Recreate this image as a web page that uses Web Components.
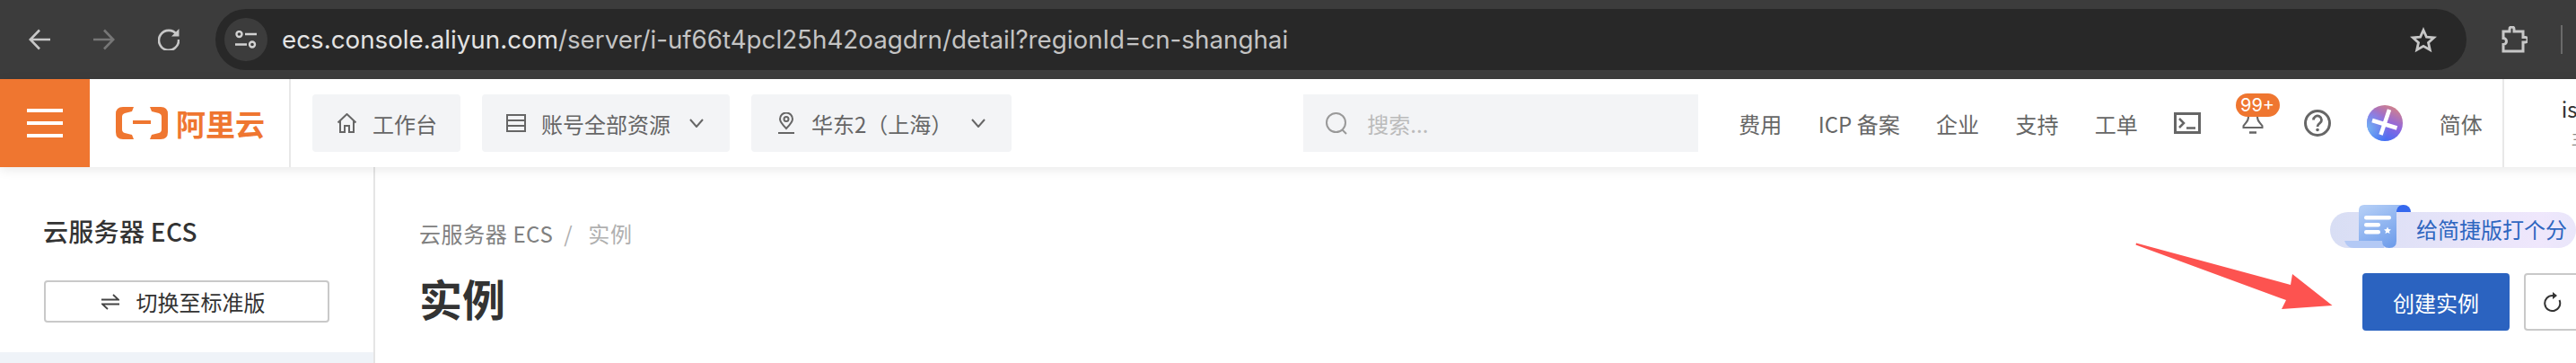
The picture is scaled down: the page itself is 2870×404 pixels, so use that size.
<!DOCTYPE html>
<html lang="zh-CN">
<head>
<meta charset="utf-8">
<title>实例</title>
<style>
    html, body { margin: 0; padding: 0; width: 2870px; height: 404px; overflow: hidden; background: #fff; }
    body { font-family: "Noto Sans CJK SC", sans-serif; position: relative; }
    svg { display: block; }
</style>
</head>
<body>
<browser-bar url-host="ecs.console.aliyun.com" url-path="/server/i-uf66t4pcl25h42oagdrn/detail?regionId=cn-shanghai"></browser-bar>
<console-header></console-header>
<console-main></console-main>
<red-arrow></red-arrow>

<script>
class BrowserBar extends HTMLElement {
    constructor() {
        super();
        this.root = this.attachShadow({ mode: "open" });
        this.root.innerHTML = `
            <style>
                :host {
                    display: flex;
                    align-items: center;
                    height: 88px;
                    box-sizing: border-box;
                    background: #3c3c3c;
                    padding-left: 32px;
                    color: #c7c7c7;
                }
                .nav { display: flex; gap: 48px; align-items: center; }
                .omni {
                    display: flex;
                    align-items: center;
                    width: 2508px;
                    height: 68px;
                    margin-left: 40px;
                    padding: 0 33px 0 10px;
                    box-sizing: border-box;
                    background: #282828;
                    border-radius: 34px;
                }
                .tune {
                    width: 48px;
                    height: 48px;
                    border-radius: 50%;
                    background: #3c3c3c;
                    display: flex;
                    align-items: center;
                    justify-content: center;
                    flex: none;
                }
                .url {
                    margin-left: 16px;
                    flex: 1;
                    font: 400 27.75px/40px Inter, "Liberation Sans", sans-serif;
                    color: #c4c4c4;
                    white-space: nowrap;
                }
                .url b { font-weight: 400; color: #e3e3e3; }
                .ext { margin-left: 38px; }
                .sep { margin-left: 37px; width: 2px; height: 32px; background: #6a6a6a; }
            </style>
            <div class="nav">
                <svg width="24" height="24" viewBox="0 0 24 24" fill="none" stroke="#c7c7c7" stroke-width="2.6"><path d="M24 12H2M12 1.5L1.8 12 12 22.5"/></svg>
                <svg width="24" height="24" viewBox="0 0 24 24" fill="none" stroke="#767676" stroke-width="2.6"><path d="M0 12H22M12 1.5L22.2 12 12 22.5"/></svg>
                <svg width="24" height="24" viewBox="0 0 24 24" fill="none" stroke="#c7c7c7" stroke-width="2.6"><path d="M21 6.5A11 11 0 1 0 23 12"/><path d="M23.5 0V8.5H15Z" fill="#c7c7c7" stroke="none"/></svg>
            </div>
            <div class="omni">
                <div class="tune">
                    <svg width="24" height="20" viewBox="0 0 24 20" fill="none" stroke="#d2d2d2" stroke-width="2.4"><circle cx="4.5" cy="4" r="3"/><path d="M11 4H24M0 15.5H13"/><circle cx="19" cy="15.5" r="3"/></svg>
                </div>
                <div class="url"><b>${this.getAttribute("url-host")}</b>${this.getAttribute("url-path")}</div>
                <svg width="30" height="29" viewBox="0 0 30 29" fill="none" stroke="#c7c7c7" stroke-width="2.8"><path d="M15 3.5l3.4 7.6 8.3.8-6.2 5.5 1.8 8.1-7.3-4.2-7.3 4.2 1.8-8.1-6.2-5.5 8.3-.8z"/></svg>
            </div>
            <svg class="ext" width="30" height="30" viewBox="0 0 30 30" fill="none" stroke="#c7c7c7" stroke-width="3"><path d="M3 6H10V3.5A2.5 2.5 0 0 1 15 3.5V6H25V12.5H27.5A2.5 2.5 0 0 1 27.5 18H25V28H3V20.5A3.5 3.5 0 0 0 3 13.5Z"/></svg>
            <div class="sep"></div>
        `;
    }
}

// grey box in the header bar, the icon comes in through a slot
class HeaderPill extends HTMLElement {
    constructor() {
        super();
        this.root = this.attachShadow({ mode: "open" });
        this.root.innerHTML = `
            <style>
                :host {
                    display: flex;
                    align-items: center;
                    height: 64px;
                    box-sizing: border-box;
                    padding: 0 26px 0 27px;
                    background: #f3f4f6;
                    border-radius: 4px;
                    font-size: 24px;
                    color: #666;
                    white-space: nowrap;
                }
                :host([arrow]) { padding-right: 29px; }
                .text { margin-left: 17px; }
                .chev { display: none; }
                :host([arrow]) .chev { display: block; margin-left: 21px; }
            </style>
            <slot name="icon"></slot>
            <span class="text"><slot></slot></span>
            <svg class="chev" width="16" height="10" viewBox="0 0 16 10" fill="none" stroke="#666" stroke-width="2"><path d="M1 1l7 8 7-8"/></svg>
        `;
    }
}

class NavLink extends HTMLElement {
    constructor() {
        super();
        this.root = this.attachShadow({ mode: "open" });
        this.root.innerHTML = `
            <style>
                :host {
                    display: block;
                    font-size: 24px;
                    color: #666;
                    white-space: nowrap;
                }
            </style>
            <slot></slot>
        `;
    }
}

class ConsoleHeader extends HTMLElement {
    constructor() {
        super();
        this.root = this.attachShadow({ mode: "open" });
        this.root.innerHTML = `
            <style>
                :host {
                    display: flex;
                    align-items: center;
                    position: relative;
                    z-index: 2;
                    height: 98px;
                    background: #fff;
                    box-shadow: 0 3px 12px rgba(0, 0, 0, .09);
                    width: 3000px;
                }
                .burger {
                    width: 100px;
                    height: 100%;
                    background: #ef7630;
                    display: flex;
                    align-items: center;
                    justify-content: center;
                }
                .logo {
                    width: 193px;
                    height: 100%;
                    padding-left: 29px;
                    border-right: 2px solid #e8e8e8;
                    display: flex;
                    align-items: center;
                    gap: 9px;
                }
                .logo span {
                    font-size: 33px;
                    font-weight: 700;
                    color: #ef7630;
                    line-height: 36px;
                }
                .pills { display: flex; gap: 24px; margin-left: 24px; }
                .search {
                    margin-left: 325px;
                    width: 440px;
                    height: 64px;
                    box-sizing: border-box;
                    padding-left: 25px;
                    background: #f3f4f6;
                    display: flex;
                    align-items: center;
                    gap: 21px;
                    font-size: 24px;
                    color: #bbb;
                }
                .right { display: flex; align-items: center; gap: 40.4px; margin-left: 45px; }
                .bell { position: relative; margin: 0 5px; }
                .badge {
                    position: absolute;
                    left: -7px;
                    top: -17px;
                    width: 49px;
                    height: 26px;
                    border-radius: 13px;
                    background: #ef7630;
                    color: #fff;
                    font: 400 20px/26px Inter, "Liberation Sans", sans-serif;
                    text-align: center;
                }
                .user {
                    height: 98px;
                    box-sizing: border-box;
                    margin-left: 22px;
                    border-left: 2px solid #e8e8e8;
                    padding: 16px 0 0 64px;
                    white-space: nowrap;
                }
                .user .name { font-size: 24px; line-height: 34px; color: #333; }
                .user .role { font-size: 18px; line-height: 26px; margin: 2px 0 0 11px; color: #888; }
                .pin { margin: 0 1px 0 2px; }
            </style>
            <div class="burger">
                <svg width="40" height="32" viewBox="0 0 40 32" fill="#fff"><rect width="40" height="4"/><rect y="14" width="40" height="4"/><rect y="28" width="40" height="4"/></svg>
            </div>
            <div class="logo">
                <svg width="58" height="36" viewBox="0 0 58 36" fill="#ef7630"><path d="M8 0H20L18 5 10 7Q7 8 7 11V25Q7 28 10 29L18 31 20 36H8Q0 36 0 28V8Q0 0 8 0Z"/><path d="M50 0H38L40 5 48 7Q51 8 51 11V25Q51 28 48 29L40 31 38 36H50Q58 36 58 28V8Q58 0 50 0Z"/><rect x="19" y="15" width="20" height="4"/></svg>
                <span>阿里云</span>
            </div>
            <div class="pills">
                <header-pill>
                    <svg slot="icon" width="23" height="22" viewBox="0 0 23 22" fill="none" stroke="#666" stroke-width="2"><path d="M1.500 10.500L11.500 1l10 9.500M4 8.500V21H9V14H14V21H19V8.500"/></svg>
                    工作台
                </header-pill>
                <header-pill arrow>
                    <svg slot="icon" width="22" height="22" viewBox="0 0 22 22" fill="none" stroke="#666" stroke-width="2"><path d="M1 2H21V8H1ZM1 8V14H21V8M1 14V20H21V14"/></svg>
                    账号全部资源
                </header-pill>
                <header-pill arrow>
                    <svg slot="icon" class="pin" width="20" height="24" viewBox="0 0 20 24" fill="none" stroke="#666" stroke-width="2"><path d="M10 18C5 13 3 10.500 3 7.500A7 7 0 0 1 17 7.500C17 10.500 15 13 10 18Z"/><circle cx="10" cy="7.500" r="2.500"/><path d="M1 23H19"/></svg>
                    华东2（上海）
                </header-pill>
            </div>
            <div class="search">
                <svg width="25" height="25" viewBox="0 0 25 25" fill="none" stroke="#999" stroke-width="2"><circle cx="11.500" cy="11.500" r="10.500"/><path d="M18.500 19.500L23 24"/></svg>
                <span>搜索...</span>
            </div>
            <div class="right">
                <nav-link>费用</nav-link>
                <nav-link>ICP 备案</nav-link>
                <nav-link>企业</nav-link>
                <nav-link>支持</nav-link>
                <nav-link>工单</nav-link>
                <svg width="30" height="24" viewBox="0 0 30 24" fill="none" stroke="#666" stroke-width="3"><rect x="1.500" y="1.500" width="27" height="21"/><path d="M6 7l5 5-5 5" stroke-width="2.500"/><path d="M14 17.500H24" stroke-width="2.500"/></svg>
                <div class="bell">
                    <svg width="24" height="28" viewBox="0 0 24 28" fill="none" stroke="#666" stroke-width="2"><path d="M7 0V9Q7 13 4 16L1.500 19V21H22.500V19L20 16Q17 13 17 9V0"/><path d="M8 26.500H16" stroke-width="2.500"/></svg>
                    <div class="badge">99+</div>
                </div>
                <svg width="30" height="30" viewBox="0 0 30 30" fill="none" stroke="#666" stroke-width="3"><circle cx="15" cy="15" r="13.500"/><path d="M10.500 11.500a4.500 4.500 0 1 1 7 3.700c-1.600 1.100-2.500 2-2.500 3.800" stroke-width="2.800"/><circle cx="15" cy="22.500" r="1.800" fill="#666" stroke="none"/></svg>
                <svg width="40" height="40" viewBox="0 0 40 40">
                    <defs>
                        <linearGradient id="av" x1="0.85" y1="0.05" x2="0.4" y2="1">
                            <stop offset="0" stop-color="#d58385"/>
                            <stop offset="0.5" stop-color="#8f66e0"/>
                            <stop offset="1" stop-color="#3b6ff5"/>
                        </linearGradient>
                        <radialGradient id="av2" cx="0" cy="0.65" r="0.6">
                            <stop offset="0" stop-color="#78b4f2"/>
                            <stop offset="1" stop-color="#78b4f2" stop-opacity="0"/>
                        </radialGradient>
                    </defs>
                    <circle cx="20" cy="20" r="20" fill="url(#av)"/>
                    <circle cx="20" cy="20" r="20" fill="url(#av2)"/>
                    <path d="M25 5L15.500 33M6 17L33.500 25.500" stroke="#fff" stroke-width="4.500" fill="none"/>
                </svg>
                <nav-link>简体</nav-link>
            </div>
            <div class="user">
                <div class="name">isv</div>
                <div class="role">主账号</div>
            </div>
        `;
    }
}

class SideBar extends HTMLElement {
    constructor() {
        super();
        this.root = this.attachShadow({ mode: "open" });
        this.root.innerHTML = `
            <style>
                :host {
                    display: flex;
                    flex-direction: column;
                    flex: none;
                    width: 418px;
                    box-sizing: border-box;
                    border-right: 2px solid #e5e5e5;
                    padding-top: 52px;
                }
                .title {
                    margin-left: 48px;
                    font-size: 28px;
                    letter-spacing: .3px;
                    line-height: 38px;
                    font-weight: 500;
                    color: #333;
                }
                button {
                    display: flex;
                    align-items: center;
                    justify-content: center;
                    gap: 19px;
                    width: 318px;
                    height: 47px;
                    margin: 36px 0 0 49px;
                    box-sizing: border-box;
                    padding: 0 8px 0 0;
                    background: #fff;
                    border: 2px solid #c9c9c9;
                    border-radius: 4px;
                    font: inherit;
                    font-size: 24px;
                    color: #333;
                }
                .active { flex: 1; margin-top: 33px; background: #eff3f8; }
            </style>
            <div class="title">云服务器 ECS</div>
            <button>
                <svg width="20" height="20" viewBox="0 0 20 20" fill="none" stroke="#444" stroke-width="1.800"><path d="M0 7.500H19L13 2M20 12.500H1L7 18"/></svg>
                切换至标准版
            </button>
            <div class="active"></div>
        `;
    }
}

class FeedbackPill extends HTMLElement {
    constructor() {
        super();
        this.root = this.attachShadow({ mode: "open" });
        this.root.innerHTML = `
            <style>
                :host {
                    display: block;
                    position: relative;
                    width: 274px;
                    height: 40px;
                    box-sizing: border-box;
                    padding-left: 96px;
                    border-radius: 20px;
                    background: linear-gradient(90deg, #d8def4, #efe7fc 85%, #e9e6fa);
                    color: #2f66c0;
                    font-size: 24px;
                    line-height: 38px;
                    white-space: nowrap;
                }
                svg { display: block; position: absolute; left: 16px; top: -8px; }
            </style>
            <svg width="74" height="48" viewBox="0 0 74 48">
                <defs>
                    <linearGradient id="pg" x1="0.2" y1="0" x2="0.8" y2="1">
                        <stop offset="0" stop-color="#b2cdf6"/>
                        <stop offset="1" stop-color="#6c9bea"/>
                    </linearGradient>
                </defs>
                <path d="M58 8V6A6 6 0 0 1 64 0H66A8 8 0 0 1 74 8Z" fill="#3568ee"/>
                <path d="M0 40H44V48H10Q3 48 0 40Z" fill="#b3c9f5"/>
                <path d="M16 6Q16 0 22 0H66Q58 0 58 8V40Q58 48 50 48Q42 48 42 40H16Z" fill="url(#pg)"/>
                <rect x="22" y="12" width="30" height="4.500" rx="2.200" fill="#fff"/>
                <rect x="22" y="20" width="18" height="4.500" rx="2.200" fill="#fff"/>
                <rect x="22" y="28" width="18" height="4.500" rx="2.200" fill="#fff"/>
                <path d="M48 24.500l1.200 2.600 2.800.3-2.100 1.900.6 2.800-2.500-1.400-2.500 1.400.6-2.800-2.100-1.900 2.800-.3z" fill="#fff"/>
            </svg>
            给简捷版打个分
        `;
    }
}

class ConsoleMain extends HTMLElement {
    constructor() {
        super();
        this.root = this.attachShadow({ mode: "open" });
        this.root.innerHTML = `
            <style>
                :host {
                    display: flex;
                    height: 218px;
                }
                .page {
                    flex: 1;
                    display: flex;
                    justify-content: space-between;
                    padding-left: 49px;
                    margin-right: -6px;
                    min-width: 0;
                }
                .crumb {
                    margin-top: 57px;
                    font-size: 24px;
                    letter-spacing: .6px;
                    line-height: 34px;
                    color: #808080;
                }
                .crumb i { font-style: normal; color: #b0b0b0; margin: 0 17px 0 12px; }
                .crumb em { font-style: normal; color: #b0b0b0; }
                h1 {
                    margin: 24px 0 0;
                    font-size: 48px;
                    line-height: 60px;
                    font-weight: 700;
                    color: #333;
                }
                .actions {
                    display: flex;
                    flex-direction: column;
                    align-items: flex-end;
                    padding-top: 50px;
                    gap: 28px;
                }
                .btns { display: flex; gap: 16px; }
                button {
                    height: 64px;
                    box-sizing: border-box;
                    padding: 0;
                    border-radius: 4px;
                    font: inherit;
                    font-size: 24px;
                    display: flex;
                    align-items: center;
                    justify-content: center;
                }
                .primary { width: 164px; background: #2b63c0; border: 0; color: #fff; }
                .refresh { width: 64px; background: #fff; border: 2px solid #c9c9c9; }
                feedback-pill { margin-right: 6px; }
            </style>
            <side-bar></side-bar>
            <div class="page">
                <div>
                    <div class="crumb">云服务器 ECS<i>/</i><em>实例</em></div>
                    <h1>实例</h1>
                </div>
                <div class="actions">
                    <feedback-pill></feedback-pill>
                    <div class="btns">
                        <button class="primary">创建实例</button>
                        <button class="refresh">
                            <svg width="20" height="22" viewBox="0 0 20 22" fill="none" stroke="#333" stroke-width="2"><path d="M10 4A8.500 8.500 0 1 0 17.500 9"/><path d="M10 0L15 4 10 8Z" fill="#333" stroke="none"/></svg>
                        </button>
                    </div>
                </div>
            </div>
        `;
    }
}

// annotation drawn on top of the screenshot
class RedArrow extends HTMLElement {
    constructor() {
        super();
        this.root = this.attachShadow({ mode: "open" });
        this.root.innerHTML = `
            <style>
                :host { display: block; position: absolute; left: 2378px; top: 269px; width: 222px; height: 78px; z-index: 5; }
                svg { display: block; }
            </style>
            <svg width="222" height="78" viewBox="2378 269 222 78">
                <path d="M2380 270.500L2552 317 2554 305 2598.500 340 2542 344 2547 334 2379.500 272.500Z" fill="#fd5350"/>
            </svg>
        `;
    }
}

customElements.define("browser-bar", BrowserBar);
customElements.define("header-pill", HeaderPill);
customElements.define("nav-link", NavLink);
customElements.define("console-header", ConsoleHeader);
customElements.define("side-bar", SideBar);
customElements.define("feedback-pill", FeedbackPill);
customElements.define("console-main", ConsoleMain);
customElements.define("red-arrow", RedArrow);
</script>
</body>
</html>
